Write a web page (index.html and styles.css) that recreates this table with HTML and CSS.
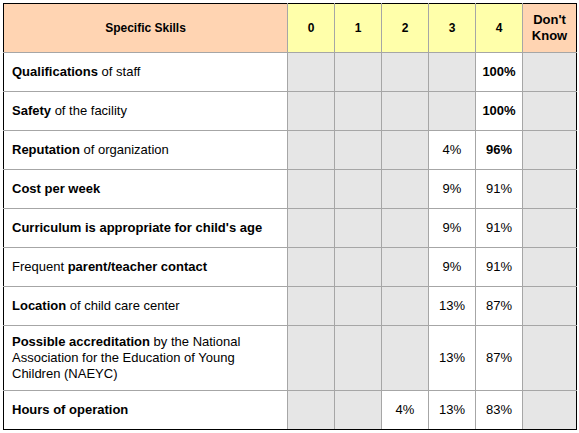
FILE: index.html
```html
<!DOCTYPE html>
<html>
<head>
<meta charset="utf-8">
<link rel="stylesheet" href="styles.css">
</head>
<body>
<table class="skills">
  <colgroup>
    <col class="c-skill">
    <col class="c-num"><col class="c-num"><col class="c-num"><col class="c-num"><col class="c-num">
    <col class="c-dk">
  </colgroup>
  <thead>
    <tr>
      <th class="h-skill">Specific Skills</th>
      <th class="h-num">0</th>
      <th class="h-num">1</th>
      <th class="h-num">2</th>
      <th class="h-num">3</th>
      <th class="h-num">4</th>
      <th class="h-dk">Don't Know</th>
    </tr>
  </thead>
  <tbody>
    <tr>
      <td class="label"><b>Qualifications</b> of staff</td>
      <td class="e"></td><td class="e"></td><td class="e"></td><td class="e"></td>
      <td class="v"><b>100%</b></td><td class="e"></td>
    </tr>
    <tr>
      <td class="label"><b>Safety</b> of the facility</td>
      <td class="e"></td><td class="e"></td><td class="e"></td><td class="e"></td>
      <td class="v"><b>100%</b></td><td class="e"></td>
    </tr>
    <tr>
      <td class="label"><b>Reputation</b> of organization</td>
      <td class="e"></td><td class="e"></td><td class="e"></td>
      <td class="v">4%</td><td class="v"><b>96%</b></td><td class="e"></td>
    </tr>
    <tr>
      <td class="label"><b>Cost per week</b></td>
      <td class="e"></td><td class="e"></td><td class="e"></td>
      <td class="v">9%</td><td class="v">91%</td><td class="e"></td>
    </tr>
    <tr>
      <td class="label"><b>Curriculum is appropriate for child's age</b></td>
      <td class="e"></td><td class="e"></td><td class="e"></td>
      <td class="v">9%</td><td class="v">91%</td><td class="e"></td>
    </tr>
    <tr>
      <td class="label">Frequent <b>parent/teacher contact</b></td>
      <td class="e"></td><td class="e"></td><td class="e"></td>
      <td class="v">9%</td><td class="v">91%</td><td class="e"></td>
    </tr>
    <tr>
      <td class="label"><b>Location</b> of child care center</td>
      <td class="e"></td><td class="e"></td><td class="e"></td>
      <td class="v">13%</td><td class="v">87%</td><td class="e"></td>
    </tr>
    <tr class="tall">
      <td class="label"><b>Possible accreditation</b> by the National Association for the Education of Young Children (NAEYC)</td>
      <td class="e"></td><td class="e"></td><td class="e"></td>
      <td class="v">13%</td><td class="v">87%</td><td class="e"></td>
    </tr>
    <tr>
      <td class="label"><b>Hours of operation</b></td>
      <td class="e"></td><td class="e"></td>
      <td class="v">4%</td><td class="v">13%</td><td class="v">83%</td><td class="e"></td>
    </tr>
  </tbody>
</table>
</body>
</html>
```

FILE: styles.css
```css
html, body {
  margin: 0;
  padding: 0;
  background: #ffffff;
}
body {
  padding: 3px 0 0 3px;
  font-family: "Liberation Sans", Arial, sans-serif;
  font-size: 13px;
  color: #000;
}
.skills {
  border-collapse: collapse;
  table-layout: fixed;
  width: 573px;
  border: 1px solid #000;
}
.c-skill { width: 284px; }
.c-num { width: 47px; }
.c-dk { width: 54px; }

.skills th, .skills td {
  border: 1px solid #a6a6a6;
  padding: 0;
  line-height: 16px;
}
.skills th {
  height: 48px;
  font-weight: bold;
  text-align: center;
  vertical-align: middle;
  font-size: 12px;
}
.h-skill { background: #ffd4b2; font-size: 13px; }
.h-num { background: #ffffaa; }
.h-dk { background: #ffd4b2; font-size: 13px !important; line-height: 16px; }

.skills tbody tr { height: 39px; }
.skills tbody tr.tall { height: 65px; }
.label {
  padding: 0 8px !important;
  text-align: left;
  vertical-align: middle;
}
.e { background: #e6e6e6; }
.v {
  background: #ffffff;
  text-align: center;
  vertical-align: middle;
}
.skills tr > :first-child { border-left: 1px solid #000; }
.skills tr > :last-child { border-right: 1px solid #000; }
.skills tbody tr:last-child td { border-bottom: 1px solid #000; }
.skills thead th { border-top: 1px solid #000; }
```
